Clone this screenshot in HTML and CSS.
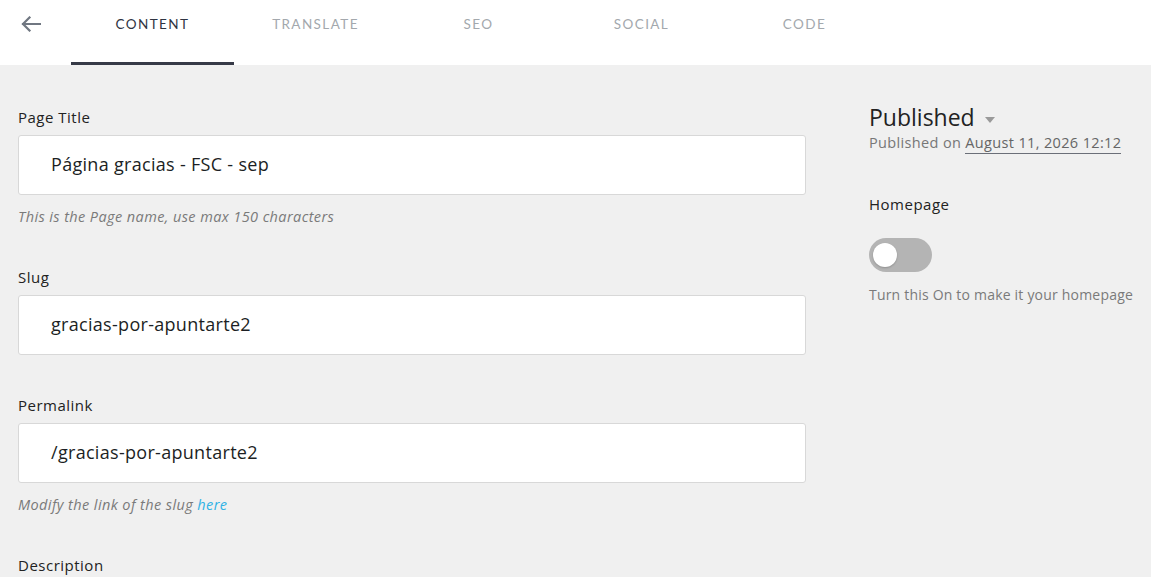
FILE: index.html
```html
<!DOCTYPE html>
<html lang="en">

<head>
  <meta charset="UTF-8">
  <meta name="viewport" content="width=device-width, initial-scale=1.0">
  <title>Edit page</title>
  <link rel="stylesheet" href="styles.css">
</head>

<body>
  <div class="topbar">
    <a href="javascript:;" class="back">
      <svg width="20" height="16" viewBox="0 0 20 16">
        <path d="M19 8H2M8.5 1.5L2 8l6.5 6.5" fill="none" stroke="#707781" stroke-width="2.2" stroke-linecap="square" />
      </svg>
    </a>
    <ul class="tabs">
      <li class="tab active">Content</li>
      <li class="tab">Translate</li>
      <li class="tab">SEO</li>
      <li class="tab">Social</li>
      <li class="tab">Code</li>
    </ul>
  </div>

  <div class="main">
    <div class="form">
      <div class="field">
        <label class="label">Page Title</label>
        <div class="input">Página gracias - FSC - sep</div>
        <p class="help">This is the Page name, use max 150 characters</p>
      </div>
      <div class="field">
        <label class="label">Slug</label>
        <div class="input">gracias-por-apuntarte2</div>
      </div>
      <div class="field">
        <label class="label">Permalink</label>
        <div class="input">/gracias-por-apuntarte2</div>
        <p class="help">Modify the link of the slug <a href="javascript:;">here</a></p>
      </div>
      <div class="field">
        <label class="label">Description</label>
      </div>
    </div>

    <div class="side">
      <div class="status">Published <span class="caret"></span></div>
      <div class="date">Published on <span class="when">August 11, 2026 12:12</span></div>

      <div class="label home">Homepage</div>
      <div class="switch"><span class="knob"></span></div>
      <p class="note">Turn this On to make it your homepage</p>
    </div>
  </div>
</body>

</html>
```

FILE: styles.css
```css
* {
  padding: 0;
  margin: 0;
  list-style: none;
  box-sizing: border-box;
}

body {
  font-family: "Open Sans", "Noto Sans", sans-serif;
  background-color: #f0f0f0;
  color: #212529;
  height: 577px;
  overflow: hidden;
}

.topbar {
  height: 65px;
  background-color: #fff;
  display: flex;
}

.back {
  width: 71px;
  display: flex;
  justify-content: center;
  padding-top: 16px;
  padding-right: 10px;
}

.tabs {
  display: flex;
}

.tab {
  width: 163px;
  text-align: center;
  font-family: "Lato", sans-serif;
  font-size: 13.5px;
  letter-spacing: 1.4px;
  text-transform: uppercase;
  color: #a3a8ad;
  padding-top: 16px;
  border-bottom: 3px solid transparent;
}

.tab.active {
  color: #2f3442;
  border-bottom-color: #363a47;
}

.main {
  display: flex;
  padding: 42px 0 0 18px;
}

.form {
  width: 788px;
}

.field {
  margin-bottom: 40px;
}

.label {
  display: block;
  font-size: 15px;
  line-height: 20px;
  letter-spacing: 0.5px;
  color: #222;
  margin-bottom: 8px;
}

.input {
  height: 60px;
  background-color: #fff;
  border: 1px solid #d8d8d8;
  border-radius: 3px;
  padding-left: 32px;
  font-size: 18px;
  line-height: 56px;
  letter-spacing: 0.3px;
  color: #1c1f24;
}

.help {
  margin-top: 12px;
  font-size: 14.5px;
  line-height: 20px;
  letter-spacing: 0.4px;
  font-style: italic;
  color: #7a7a7a;
}

.help a {
  color: #2fb2e5;
  text-decoration: none;
}

.side {
  margin-left: 63px;
}

.status {
  font-size: 23px;
  line-height: 30px;
  color: #222;
  margin-top: -5px;
}

.caret {
  display: inline-block;
  vertical-align: middle;
  margin-left: 4px;
  border-left: 5px solid transparent;
  border-right: 5px solid transparent;
  border-top: 6px solid #9a9a9a;
}

.date {
  font-size: 14.5px;
  line-height: 20px;
  letter-spacing: 0.35px;
  color: #777;
  margin-top: 1px;
}

.when {
  color: #666;
  border-bottom: 1px solid #6b6f78;
  padding-bottom: 1px;
}

.home {
  margin-top: 41px;
}

.switch {
  width: 63px;
  height: 34px;
  border-radius: 17px;
  background-color: #b4b4b4;
  margin-top: 24px;
  padding: 5px 4px;
}

.knob {
  display: block;
  width: 24px;
  height: 24px;
  border-radius: 50%;
  background-color: #fff;
  box-shadow: 0 1px 2px rgba(0, 0, 0, 0.2);
}

.note {
  margin-top: 13px;
  font-size: 14px;
  line-height: 20px;
  letter-spacing: 0.2px;
  color: #7a7a7a;
}
```
